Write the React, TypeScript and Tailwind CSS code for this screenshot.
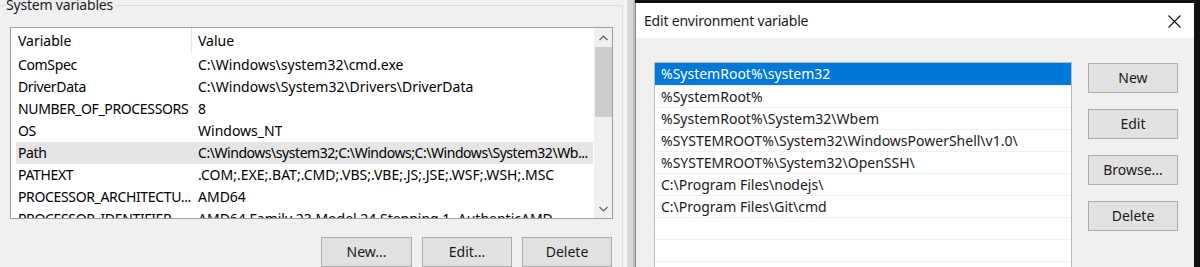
import React from "react";

const sysVars: [string, string][] = [
  ["ComSpec", "C:\\Windows\\system32\\cmd.exe"],
  ["DriverData", "C:\\Windows\\System32\\Drivers\\DriverData"],
  ["NUMBER_OF_PROCESSORS", "8"],
  ["OS", "Windows_NT"],
  ["Path", "C:\\Windows\\system32;C:\\Windows;C:\\Windows\\System32\\Wb..."],
  ["PATHEXT", ".COM;.EXE;.BAT;.CMD;.VBS;.VBE;.JS;.JSE;.WSF;.WSH;.MSC"],
  ["PROCESSOR_ARCHITECTU...", "AMD64"],
  ["PROCESSOR_IDENTIFIER", "AMD64 Family 23 Model 24 Stepping 1, AuthenticAMD"],
];

const pathEntries = [
  "%SystemRoot%\\system32",
  "%SystemRoot%",
  "%SystemRoot%\\System32\\Wbem",
  "%SYSTEMROOT%\\System32\\WindowsPowerShell\\v1.0\\",
  "%SYSTEMROOT%\\System32\\OpenSSH\\",
  "C:\\Program Files\\nodejs\\",
  "C:\\Program Files\\Git\\cmd",
  "",
  "",
  "",
];

function WinButton({ label, className = "" }: { label: string; className?: string }) {
  return (
    <div
      className={`w-[90px] h-[30px] shrink-0 border border-[#adadad] bg-[#e1e1e1] flex items-center justify-center text-[#1a1a1a] ${className}`}
    >
      {label}
    </div>
  );
}

function Chevron({ up }: { up?: boolean }) {
  return (
    <svg width="9" height="6" viewBox="0 0 9 6" className="text-[#606060]">
      <polyline
        points={up ? "0.5,5 4.5,1 8.5,5" : "0.5,1 4.5,5 8.5,1"}
        fill="none"
        stroke="currentColor"
        strokeWidth="1.2"
      />
    </svg>
  );
}

export default function App() {
  return (
    <div className="w-[1200px] h-[267px] overflow-hidden flex bg-[#f0f0f0] text-[14px] leading-[20px] text-black font-[family-name:'Noto_Sans',sans-serif]">
      {/* Environment Variables window (behind) */}
      <div className="w-[625px] shrink-0 bg-[#f0f0f0]">
        <fieldset className="-mt-[5px] mr-[2px] border-t border-r border-[#dcdcdc] pl-[6px] pb-[20px]">
          <legend className="pr-[3px] tracking-[-0.2px] text-[#1a1a1a]">System variables</legend>

          <div className="ml-[4px] mt-[12px] w-[603px] h-[192px] border border-[#a0a0a0] bg-white flex">
            <div className="flex-1 min-w-0 overflow-hidden pl-[5px] pr-[1px]">
              {/* header */}
              <div className="h-[26px] flex items-center">
                <div className="w-[175px] shrink-0 pl-[2px]">Variable</div>
                <div className="w-px h-full bg-[#e5e5e5]" />
                <div className="pl-[6px]">Value</div>
              </div>
              {sysVars.map(([name, value]) => (
                <div
                  key={name}
                  className={`h-[22px] flex items-center whitespace-nowrap ${
                    name === "Path" ? "bg-[#e5e5e5]" : ""
                  }`}
                >
                  <div className="w-[175px] shrink-0 pl-[2px] overflow-hidden tracking-[-0.35px]">
                    {name}
                  </div>
                  <div
                    className={`pl-[7px] overflow-hidden ${
                      name === "Path" ? "tracking-[-0.45px]" : ""
                    }`}
                  >
                    {value}
                  </div>
                </div>
              ))}
            </div>
            {/* scrollbar */}
            <div className="w-[18px] shrink-0 bg-[#f0f0f0] flex flex-col items-center">
              <div className="h-[19px] flex items-center justify-center">
                <Chevron up />
              </div>
              <div className="w-[17px] h-[70px] bg-[#cdcdcd]" />
              <div className="flex-1" />
              <div className="h-[19px] flex items-center justify-center">
                <Chevron />
              </div>
            </div>
          </div>

          <div className="mt-[18px] flex justify-end gap-[10px] pr-[10px]">
            <WinButton label="New..." className="w-[91px]" />
            <WinButton label="Edit..." />
            <WinButton label="Delete" />
          </div>
        </fieldset>
      </div>

      {/* window edge / shadow */}
      <div className="w-[10px] shrink-0 flex">
        <div className="w-[2px] bg-[#f7f7f7]" />
        <div className="w-[6px] bg-[#d9d9d9]" />
        <div className="w-[2px] bg-[#bdbdbd]" />
      </div>

      {/* Edit environment variable dialog */}
      <div className="flex-1 flex flex-col bg-[#111] pt-[3px] pr-[6px]">
        <div className="flex-1 flex flex-col border-l border-[#8c8c8c] bg-[#f0f0f0]">
          <div className="h-[35px] shrink-0 bg-white flex items-center justify-between pl-[8px] pr-[13px] pt-[1px]">
            <span className="text-[#1a1a1a] tracking-[-0.2px]">Edit environment variable</span>
            <svg width="13" height="13" viewBox="0 0 13 13">
              <path d="M0.5 0.5 L12.5 12.5 M12.5 0.5 L0.5 12.5" stroke="#111" strokeWidth="1.1" />
            </svg>
          </div>
          <div className="flex pt-[24px] pl-[18px] gap-[16px]">
            <div className="w-[418px] h-[240px] shrink-0 border border-[#b6bcc6] bg-white">
              {pathEntries.map((p, i) => (
                <div
                  key={i}
                  className={`h-[22px] pl-[6px] flex items-center whitespace-nowrap ${
                    i === 0
                      ? "bg-[#0078d7] text-white"
                      : "border-t border-[#f0f0f0] text-[#1a1a1a]"
                  }`}
                >
                  {p}
                </div>
              ))}
            </div>
            <div className="flex flex-col gap-[16px] pt-[1px]">
              <WinButton label="New" />
              <WinButton label="Edit" />
              <WinButton label="Browse..." />
              <WinButton label="Delete" />
            </div>
          </div>
        </div>
      </div>
    </div>
  );
}
